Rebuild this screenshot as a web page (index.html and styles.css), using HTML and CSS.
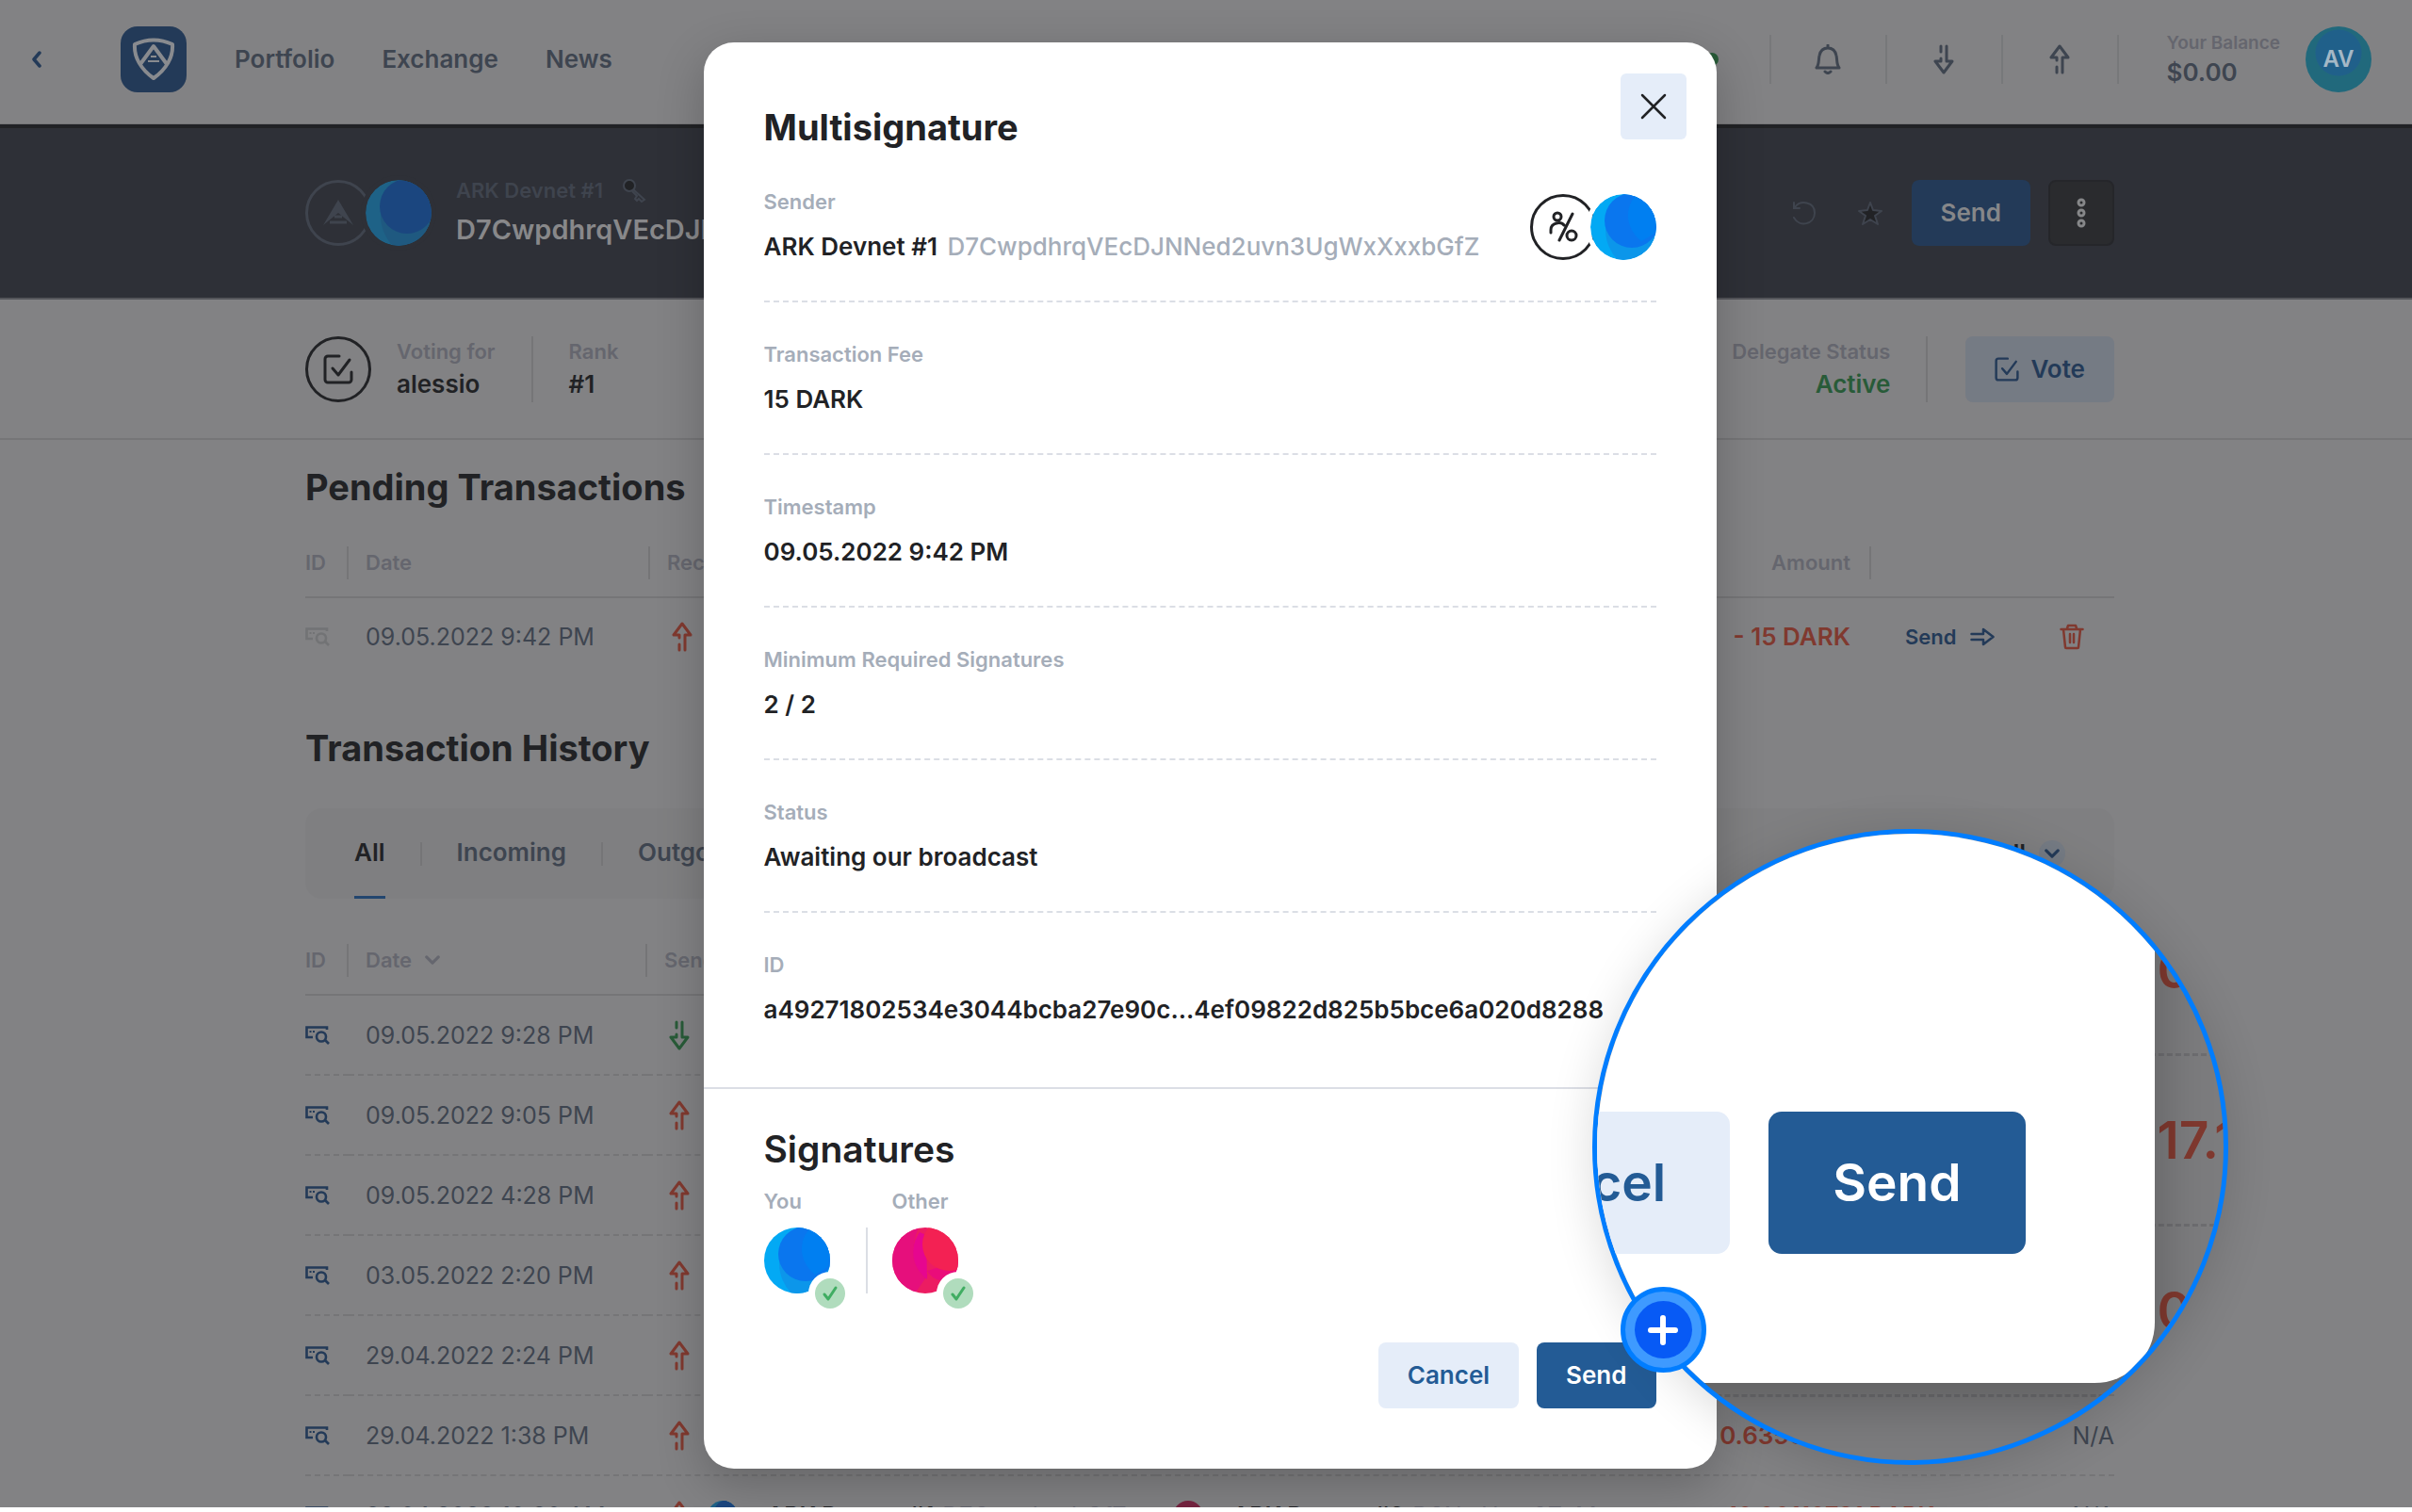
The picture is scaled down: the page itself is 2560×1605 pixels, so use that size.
FILE: index.html
```html
<!DOCTYPE html>
<html lang="en">
<head>
<meta charset="utf-8">
<title>Multisignature</title>
<link rel="stylesheet" href="styles.css">
</head>
<body>
<svg class="sprite" aria-hidden="true">
  <defs>
    <clipPath id="round"><circle cx="35" cy="35" r="35"/></clipPath>
    <symbol id="moon" viewBox="0 0 70 70">
      <g clip-path="url(#round)">
        <rect width="70" height="70" fill="#03a9f4"/>
        <circle cx="62" cy="38" r="46" fill="#0c96ea"/>
        <circle cx="44" cy="28" r="29" fill="#0a76ee"/>
        <path d="M50 0C36 12 36 36 54 50l14-8 4-42z" fill="#007ff1"/>
      </g>
    </symbol>
    <symbol id="moon-dim" viewBox="0 0 70 70">
      <g clip-path="url(#round)">
        <rect width="70" height="70" fill="#1e6287"/>
        <circle cx="62" cy="38" r="46" fill="#1f5980"/>
        <circle cx="44" cy="28" r="29" fill="#1b467f"/>
      </g>
    </symbol>
    <symbol id="rose" viewBox="0 0 70 70">
      <g clip-path="url(#round)">
        <rect width="70" height="70" fill="#ec1c62"/>
        <path d="M0 0h28C18 24 22 44 38 50L24 70H0z" fill="#e60f7c"/>
        <path d="M29 5C18 20 20 42 37 55L36 8z" fill="#e6068f"/>
        <path d="M37 46c6 10 18 14 33 8V36z" fill="#ea0c7a"/>
        <circle cx="60" cy="18" r="28" fill="#f32153"/>
      </g>
    </symbol>
    <symbol id="rose-dim" viewBox="0 0 70 70"><circle cx="35" cy="35" r="35" fill="#762440"/></symbol>
    <symbol id="up" viewBox="0 0 22 32">
      <g fill="none" stroke="currentColor" stroke-width="3" stroke-linecap="round" stroke-linejoin="round">
        <path d="M14 30V14h6L11 2 2 14h6v3M8 24v6"/>
      </g>
    </symbol>
    <symbol id="down" viewBox="0 0 22 32">
      <g fill="none" stroke="currentColor" stroke-width="3" stroke-linecap="round" stroke-linejoin="round">
        <path d="M14 2v16h6l-9 12L2 18h6v-3M8 8V2"/>
      </g>
    </symbol>
    <symbol id="find" viewBox="0 0 26 20">
      <g fill="none" stroke="currentColor" stroke-width="2.6">
        <path d="M23 4V1.500H1.500V12H8"/><path d="M4.500 6h2M8 6h2" stroke-width="2"/>
        <circle cx="17" cy="11.500" r="5"/><path d="M21 15l4 4"/>
      </g>
    </symbol>
    <symbol id="ballot" viewBox="0 0 32 32">
      <g fill="none" stroke="currentColor" stroke-width="3" stroke-linecap="round" stroke-linejoin="round">
        <path d="M17 2H5a3 3 0 0 0-3 3v22a3 3 0 0 0 3 3h22a3 3 0 0 0 3-3v-8M10 15l6 7L28 6"/>
      </g>
    </symbol>
    <symbol id="chevron" viewBox="0 0 18 12">
      <path d="M2 2l7 7 7-7" fill="none" stroke="currentColor" stroke-width="3.500" stroke-linecap="round" stroke-linejoin="round"/>
    </symbol>
  </defs>
</svg>

<div class="app">
  <header class="topbar">
    <a class="back" href="#" aria-label="Back">
      <svg width="12" height="18" viewBox="0 0 12 18"><path d="M9 2L3 9l6 7" fill="none" stroke="currentColor" stroke-width="3.500" stroke-linecap="round" stroke-linejoin="round"/></svg>
    </a>
    <a class="logo" href="#" aria-label="Home">
      <svg width="46" height="46" viewBox="0 0 46 46" fill="none" stroke="currentColor" stroke-width="4" stroke-linejoin="round">
        <path d="M3 7q20-9 40 0c1 14-7 27-20 36C10 34 2 21 3 7z"/>
        <path d="M9 28L23 9l14 19" stroke-width="4"/>
        <path d="M20 20h6M17 25h12" stroke-width="2"/>
      </svg>
    </a>
    <nav class="nav">
      <a href="#">Portfolio</a><a href="#">Exchange</a><a href="#">News</a>
    </nav>
    <div class="status"><span class="dot"></span></div>
    <div class="tools">
      <button class="tool" aria-label="Notifications">
        <svg width="28" height="32" viewBox="0 0 28 32" fill="none" stroke="currentColor" stroke-width="3" stroke-linecap="round" stroke-linejoin="round"><path d="M14 1v3M2 25h24c-3-4-2-9-3-13-1-5-4-8-9-8s-8 3-9 8c-1 4 0 9-3 13zM11 29q3 3 6 0"/></svg>
      </button>
      <button class="tool" aria-label="Receive"><svg width="22" height="32"><use href="#down"/></svg></button>
      <button class="tool" aria-label="Send funds"><svg width="22" height="32"><use href="#up"/></svg></button>
    </div>
    <div class="balance"><span class="label">Your Balance</span><span class="amount">$0.00</span></div>
    <div class="profile">AV</div>
  </header>

  <section class="wallet">
    <div class="pair">
      <span class="ring dim">
        <svg width="32" height="27" viewBox="0 0 32 27"><path d="M16 0l16 27L16 14 0 27z" fill="#3f444e"/><path d="M12 18h8M7 24h18" stroke="#3f444e" stroke-width="3"/></svg>
      </span>
      <svg class="avatar halo" width="70" height="70"><use href="#moon-dim"/></svg>
    </div>
    <div class="wallet-name">
      <span class="label">ARK Devnet #1
        <svg width="26" height="26" viewBox="0 0 26 26" fill="none" stroke="currentColor" stroke-width="2"><circle cx="8" cy="8" r="6" fill="#212225"/><path d="M12 12l12 11-3 2-3-3-2 2-2-2 2-3-5-5"/></svg>
      </span>
      <span class="address">D7CwpdhrqVEcDJNNed2uvn3UgWxXxxbGfZ</span>
    </div>
    <div class="wallet-actions">
      <button class="ghost" aria-label="Refresh"><svg width="26" height="26" viewBox="0 0 26 26" fill="none" stroke="currentColor" stroke-width="2" stroke-linecap="round"><path d="M2 2v6h6M3 7C9-1 24 1 24 13 24 25 8 29 2 18"/></svg></button>
      <button class="ghost" aria-label="Favourite"><svg width="26" height="26" viewBox="0 0 26 26" fill="#212225" stroke="currentColor" stroke-width="2" stroke-linejoin="round"><path d="M13 2l3 8 9 1-7 5 3 9-8-5-8 5 3-9-7-5 9-1z"/></svg></button>
      <button class="btn navy">Send</button>
      <button class="btn more" aria-label="More"><svg width="10" height="32" viewBox="0 0 10 32" fill="none" stroke="currentColor" stroke-width="3"><circle cx="5" cy="5" r="3"/><circle cx="5" cy="16" r="3"/><circle cx="5" cy="27" r="3"/></svg></button>
    </div>
  </section>

  <section class="votes">
    <span class="ring"><svg width="32" height="32"><use href="#ballot"/></svg></span>
    <div class="stat first"><span class="label">Voting for</span><span class="value">alessio</span></div>
    <div class="stat"><span class="label">Rank</span><span class="value">#1</span></div>
    <div class="stat last"><span class="label">Delegate Status</span><span class="value green">Active</span></div>
    <button class="btn vote"><svg width="26" height="26"><use href="#ballot"/></svg>Vote</button>
  </section>

  <main class="content">
    <h2>Pending Transactions</h2>
    <table class="grid pending">
      <colgroup><col class="c-id"><col class="c-date"><col><col class="c-amount"><col class="c-act"></colgroup>
      <thead><tr><th><span>ID</span></th><th><span>Date</span></th><th><span>Recipient</span></th><th class="right"><span>Amount</span></th><th></th></tr></thead>
      <tbody><tr>
        <td class="faint"><svg width="26" height="20"><use href="#find"/></svg></td>
        <td>09.05.2022 9:42 PM</td>
        <td><svg class="red" width="22" height="32"><use href="#up"/></svg></td>
        <td class="right red strong">- 15 DARK</td>
        <td><div class="row-actions">
          <button class="link">Send <svg width="26" height="20" viewBox="0 0 26 20" fill="none" stroke="currentColor" stroke-width="2.500" stroke-linecap="round" stroke-linejoin="round"><path d="M1.500 7H14V2l10.500 8L14 18v-5H1.500"/></svg></button>
          <button class="link red" aria-label="Delete"><svg width="26" height="28" viewBox="0 0 26 28" fill="none" stroke="currentColor" stroke-width="2.500" stroke-linecap="round" stroke-linejoin="round"><path d="M1.500 6h23M8 5l1-3h8l1 3M4 6l2 19q0 1 1 1h12q1 0 1-1l2-19M11 11v9M15 11v9"/></svg></button>
        </div></td>
      </tr></tbody>
    </table>

    <h2 class="spaced">Transaction History</h2>
    <div class="tabs">
      <button class="tab active">All</button><button class="tab">Incoming</button><button class="tab">Outgoing</button>
      <button class="filter">Type: All <span class="drop"><svg width="16" height="11"><use href="#chevron"/></svg></span></button>
    </div>
    <table class="grid history">
      <colgroup><col class="c-id"><col class="c-date"><col class="c-party"><col><col class="c-fiat"></colgroup>
      <thead><tr><th><span>ID</span></th><th><span>Date <svg width="16" height="11"><use href="#chevron"/></svg></span></th><th><span>Sender</span></th><th></th><th></th></tr></thead>
      <tbody>
        <tr><td class="blue"><svg width="26" height="20"><use href="#find"/></svg></td><td>09.05.2022 9:28 PM</td><td><svg class="green" width="22" height="32"><use href="#down"/></svg></td><td></td><td></td></tr>
        <tr><td class="blue"><svg width="26" height="20"><use href="#find"/></svg></td><td>09.05.2022 9:05 PM</td><td><svg class="red" width="22" height="32"><use href="#up"/></svg></td><td></td><td></td></tr>
        <tr><td class="blue"><svg width="26" height="20"><use href="#find"/></svg></td><td>09.05.2022 4:28 PM</td><td><svg class="red" width="22" height="32"><use href="#up"/></svg></td><td></td><td></td></tr>
        <tr><td class="blue"><svg width="26" height="20"><use href="#find"/></svg></td><td>03.05.2022 2:20 PM</td><td><svg class="red" width="22" height="32"><use href="#up"/></svg></td><td></td><td></td></tr>
        <tr><td class="blue"><svg width="26" height="20"><use href="#find"/></svg></td><td>29.04.2022 2:24 PM</td><td><svg class="red" width="22" height="32"><use href="#up"/></svg></td><td></td><td></td></tr>
        <tr><td class="blue"><svg width="26" height="20"><use href="#find"/></svg></td><td>29.04.2022 1:38 PM</td><td><svg class="red" width="22" height="32"><use href="#up"/></svg></td><td class="right red strong">- 0.63500731 DARK</td><td class="fiat">N/A</td></tr>
        <tr><td class="blue"><svg width="26" height="20"><use href="#find"/></svg></td><td>29.04.2022 10:20 AM</td>
          <td><div class="party"><svg class="red" width="22" height="32"><use href="#up"/></svg><svg width="32" height="32"><use href="#moon-dim"/></svg><b>ARK Devnet #1</b><i>D7Cwpd…xbGfZ</i></div></td>
          <td><div class="party"><svg width="32" height="32"><use href="#rose-dim"/></svg><b>ARK Devnet #2</b><i>D8NwHo…9ZxMe</i><strong class="red">10.00110731 DARK</strong></div></td>
          <td class="fiat">N/A</td></tr>
      </tbody>
    </table>
  </main>

  <div class="overlay">
    <div class="modal" role="dialog" aria-labelledby="title">
      <button class="close" aria-label="Close"><svg width="28" height="28" viewBox="0 0 28 28"><path d="M2 2l24 24M26 2L2 26" fill="none" stroke="#212225" stroke-width="2.500" stroke-linecap="round"/></svg></button>
      <div class="details">
        <h1 id="title">Multisignature</h1>
        <dl>
          <div class="item sender">
            <div>
              <dt>Sender</dt>
              <dd>ARK Devnet #1 <span class="hash">D7CwpdhrqVEcDJNNed2uvn3UgWxXxxbGfZ</span></dd>
            </div>
            <div class="pair">
              <span class="ring"><svg width="32" height="34" viewBox="0 0 32 34" fill="none" stroke="currentColor" stroke-width="3" stroke-linecap="round"><circle cx="10" cy="6" r="4"/><circle cx="25" cy="26" r="5"/><path d="M26 3L12 31M3 23v-3c0-8 11-9 14-5"/></svg></span>
              <svg class="avatar halo" width="70" height="70"><use href="#moon"/></svg>
            </div>
          </div>
          <div class="item"><dt>Transaction Fee</dt><dd>15 DARK</dd></div>
          <div class="item"><dt>Timestamp</dt><dd>09.05.2022 9:42 PM</dd></div>
          <div class="item"><dt>Minimum Required Signatures</dt><dd>2 / 2</dd></div>
          <div class="item"><dt>Status</dt><dd>Awaiting our broadcast</dd></div>
          <div class="item"><dt>ID</dt><dd>a49271802534e3044bcba27e90c...4ef09822d825b5bce6a020d8288</dd></div>
        </dl>
      </div>
      <div class="signatures">
        <h2>Signatures</h2>
        <div class="signers">
          <div class="signer"><span class="caption">You</span>
            <div class="signed"><svg width="70" height="70"><use href="#moon"/></svg>
              <span class="tick"><svg width="18" height="18" viewBox="0 0 18 18"><path d="M3 10l4 5L15 3" fill="none" stroke="#40ad62" stroke-width="3" stroke-linecap="round" stroke-linejoin="round"/></svg></span></div></div>
          <div class="signer"><span class="caption">Other</span>
            <div class="signed"><svg width="70" height="70"><use href="#rose"/></svg>
              <span class="tick"><svg width="18" height="18" viewBox="0 0 18 18"><path d="M3 10l4 5L15 3" fill="none" stroke="#40ad62" stroke-width="3" stroke-linecap="round" stroke-linejoin="round"/></svg></span></div></div>
        </div>
        <div class="actions"><button class="btn light">Cancel</button><button class="btn primary">Send</button></div>
      </div>

      <div class="lens" aria-hidden="true">
        <div class="lens-rows"><span>0.1</span><span>17.15</span><span>0.6</span></div>
        <div class="lens-panel"><span class="big light">Cancel</span><span class="big primary">Send</span></div>
      </div>
      <div class="plus"><span><svg width="32" height="32" viewBox="0 0 32 32"><path d="M16 3v26M3 16h26" stroke="#fff" stroke-width="6" stroke-linecap="round"/></svg></span></div>
    </div>
  </div>
</div>
</body>
</html>
```
FILE: styles.css
```css
:root {
  --page: #828284;
  --ink: #212225;
  --slate: #3e4550;
  --muted: #65666e;
  --line: #757577;
  --navy: #233a58;
  --band: #2e3037;
  --red: #80392f;
  --green: #285b38;
  --blue: #235b95;
  --sky: #e5edf9;
  --soft: #a5adb9;
}
* { box-sizing: border-box; }
body { margin: 0; background: #fff; font-family: Inter, "Liberation Sans", sans-serif; font-size: 26px; line-height: 42px; color: var(--ink); }
a { color: inherit; text-decoration: none; }
button { font: inherit; color: inherit; border: 0; padding: 0; background: none; }
h1, h2, dl, dd { margin: 0; }
svg { display: block; }
.sprite { position: absolute; width: 0; height: 0; }
.app { position: relative; height: calc(100vh - 5px); overflow: hidden; background: var(--page); }
.label { font-size: 22px; line-height: 32px; font-weight: 600; color: var(--muted); }
.red { color: var(--red); }
.green { color: var(--green); }
.blue { color: var(--navy); }
.grid .strong { font-size: 26px; font-weight: 600; }

.topbar { display: flex; align-items: center; padding: 28px 43px 33px 33px; border-bottom: 1px solid var(--line); color: var(--slate); font-weight: 600; }
.back { width: 95px; color: var(--navy); }
.logo { display: grid; place-items: center; width: 70px; height: 70px; border-radius: 18px; background: var(--navy); color: #898b8f; }
.nav { display: flex; gap: 50px; margin-left: 51px; }
.status { flex: 1; display: flex; justify-content: flex-end; padding-right: 54px; }
.dot { width: 14px; height: 14px; border-radius: 50%; background: var(--green); }
.tools { display: flex; border-left: 2px solid #77787a; }
.tool { display: grid; place-items: center; width: 123px; height: 52px; border-right: 2px solid #77787a; }
.balance { display: flex; flex-direction: column; margin-left: 51px; }
.balance .label { font-size: 19px; line-height: 28px; }
.balance .amount { line-height: 34px; }
.profile { display: grid; place-items: center; width: 70px; height: 70px; margin-left: 27px; border-radius: 50%; font-size: 24px; color: #a5b8c6; background: radial-gradient(circle at 50% 40%, #20608a 0 24px, #21697c 25px); }

.wallet { display: flex; align-items: center; padding: 50px 316px 51px 324px; border-top: 4px solid var(--ink); border-bottom: 2px solid #55565b; background: var(--band); }
.pair { display: flex; }
.ring { display: grid; place-items: center; width: 70px; height: 70px; border: 3px solid var(--ink); border-radius: 50%; }
.ring.dim { border-color: #3f444e; }
.halo { margin-left: -6px; border-radius: 50%; box-shadow: 0 0 0 5px var(--band); }
.modal .halo { box-shadow: 0 0 0 5px #fff; }
.wallet-name { display: flex; flex-direction: column; margin-left: 26px; flex: 1; }
.wallet-name .label { display: flex; align-items: center; gap: 20px; color: #3f444e; }
.address { font-size: 29px; line-height: 42px; font-weight: 600; color: #88888a; padding-top: 5px; }
.wallet-actions { display: flex; align-items: center; }
.ghost { margin-right: 44px; color: #3f444e; }
.ghost + .ghost { margin-right: 31px; }
.btn { display: flex; align-items: center; justify-content: center; gap: 12px; height: 70px; padding: 0 31px; border-radius: 8px; font-weight: 600; }
.navy { background: var(--navy); color: #868789; }
.more { width: 70px; margin-left: 19px; padding: 0; border: 2px solid #25262a; background: #2a2b2e; color: #868789; }

.votes { display: flex; align-items: center; padding: 39px 316px 38px 324px; border-bottom: 2px solid var(--line); }
.stat { display: flex; flex-direction: column; height: 70px; padding: 0 38px; line-height: 38px; font-weight: 600; }
.stat.first { padding-left: 27px; border-right: 2px solid var(--line); }
.stat.last { margin-left: auto; text-align: right; border-right: 2px solid var(--line); }
.vote { margin-left: 40px; background: #757b84; color: var(--navy); }

.content { padding: 27px 316px 0 324px; }
h2 { font-size: 39px; line-height: 46px; font-weight: 700; }
.content h2 { font-size: 38px; }
.spaced { margin-top: 54px; }
.grid { width: 100%; margin-top: 18px; border-spacing: 0; table-layout: fixed; color: var(--slate); }
.c-id { width: 46px; }
.c-date { width: 320px; }
.history .c-date { width: 317px; }
.c-amount { width: 420px; }
.c-act { width: 258px; }
.c-party { width: 540px; }
.c-fiat { width: 169px; }
.grid th { padding: 22px 0 18px; border-bottom: 2px solid var(--line); text-align: left; font-size: 22px; line-height: 35px; font-weight: 600; color: var(--muted); }
.grid th span { display: flex; align-items: center; gap: 14px; height: 35px; border-right: 2px solid var(--line); padding: 0 20px 0 18px; }
.grid th:first-child span { padding: 0; }
.grid th.right span { justify-content: flex-end; }
.grid th:nth-child(3) span { border: 0; }
.grid td { height: 82px; padding: 0 22px 0 18px; font-size: 25px; }
.grid td:first-child { padding: 0; }
.grid td:nth-child(3) svg:first-child { margin-left: 5px; }
.grid .right { text-align: right; }
.faint { color: #727375; }
.row-actions { display: flex; align-items: center; justify-content: space-between; padding: 0 10px 0 18px; }
.link { display: flex; align-items: center; gap: 14px; font-size: 22px; font-weight: 600; color: var(--navy); }
.link.red { color: var(--red); }
.tabs { display: flex; align-items: center; height: 96px; margin-top: 41px; padding: 0 52px; border-radius: 18px; background: #7f7f81; color: var(--slate); font-weight: 600; }
.tab { height: 96px; border-bottom: 3px solid transparent; margin-right: 76px; }
.tab.active { color: var(--ink); border-color: #23466f; }
.tab + .tab { position: relative; }
.tab + .tab::before { content: ""; position: absolute; left: -39px; top: 36px; width: 2px; height: 25px; background: var(--line); }
.filter { display: flex; align-items: center; gap: 14px; margin-left: auto; color: var(--ink); }
.drop { display: grid; place-items: center; width: 28px; height: 28px; border-radius: 50%; background: #757b84; color: var(--navy); }
.history { margin-top: 26px; }
.history td { height: 85px; border-bottom: 2px dashed #757577; white-space: nowrap; }
.grid .fiat { padding: 0; text-align: right; }
.party { display: flex; align-items: center; gap: 19px; }
.party b { font-weight: 600; color: var(--ink); margin-left: 12px; }
.party i { font-style: normal; color: var(--muted); margin-left: -10px; }
.party strong { margin-left: auto; font-weight: 600; }

.overlay { position: absolute; inset: 0; display: flex; justify-content: center; align-items: flex-start; padding: 45px 0 0 8px; }
.modal { position: relative; width: 1075px; border-radius: 32px; background: #fff; box-shadow: 0 16px 50px rgba(0, 0, 0, .22); }
.close { position: absolute; top: 33px; right: 32px; display: grid; place-items: center; width: 70px; height: 70px; border-radius: 6px; background: var(--sky); }
.details { padding: 67px 64px 46px 64px; border-bottom: 2px solid #dbdee5; }
h1 { font-size: 38px; line-height: 46px; font-weight: 700; }
.item { padding: 39px 0 36px; border-bottom: 2px dashed #dbdee5; }
.item.sender { display: flex; justify-content: space-between; align-items: center; }
.item:first-child { padding-top: 40px; }
.item:last-child { border: 0; padding-bottom: 15px; }
dt, .caption { font-size: 22px; line-height: 32px; font-weight: 600; color: var(--soft); }
dd { padding-top: 11px; font-weight: 600; }
.hash { margin-left: 4px; font-weight: 500; color: var(--soft); }
.signatures { padding: 41px 64px 64px 64px; }
.signatures h2 { font-weight: 600; }
.signers { display: flex; padding-top: 16px; }
.signer { display: flex; flex-direction: column; gap: 12px; }
.signer + .signer { margin-left: 66px; }
.signed { position: relative; width: 70px; height: 70px; }
.signer + .signer .signed::before { content: ""; position: absolute; left: -28px; width: 2px; height: 70px; background: #dbdee5; }
.tick { position: absolute; left: 54px; top: 54px; display: grid; place-items: center; width: 32px; height: 32px; border-radius: 50%; background: #b0dcbd; box-shadow: 0 0 0 7px #fff; }
.actions { display: flex; justify-content: flex-end; gap: 19px; padding-top: 52px; }
.light { background: var(--sky); color: var(--blue); }
.primary { background: var(--blue); color: #fff; }

.lens { position: absolute; left: 943px; top: 835px; width: 675px; height: 675px; border: 5px solid #007dff; border-radius: 50%; overflow: hidden; background: #7c7c7e; box-shadow: 0 8px 50px rgba(0, 0, 0, .14); }
.lens-rows { position: absolute; inset: 55px 0 auto; font-size: 55px; line-height: 178px; font-weight: 600; color: var(--red); }
.lens-rows span { display: block; padding-left: 595px; border-bottom: 3px dashed #6d6d70; white-space: nowrap; }
.lens-panel { position: absolute; left: -100px; top: -100px; display: flex; justify-content: flex-end; align-items: flex-end; gap: 41px; width: 692px; height: 683px; padding: 137px; border-radius: 64px; background: #fff; box-shadow: 0 20px 60px rgba(0, 0, 0, .25); }
.big { padding: 0 68px; border-radius: 14px; font-size: 55px; line-height: 151px; font-weight: 600; }
.plus { position: absolute; left: 973px; top: 1321px; display: grid; place-items: center; width: 91px; height: 91px; border: 5px solid #007dff; border-radius: 50%; background: #3e9aff; }
.plus span { display: grid; place-items: center; width: 61px; height: 61px; border-radius: 50%; background: #075af5; }
```
